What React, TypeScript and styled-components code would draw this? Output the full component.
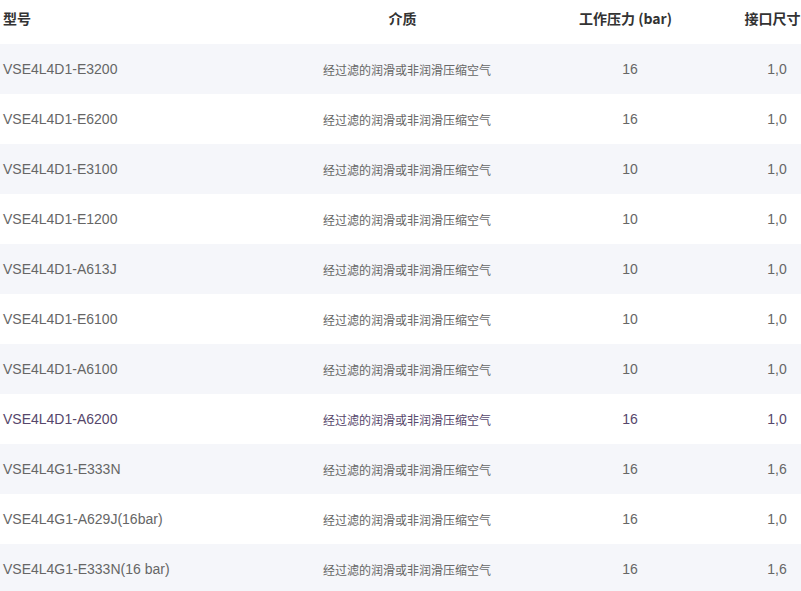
import React from "react";
import styled, { createGlobalStyle } from "styled-components";

const Global = createGlobalStyle`
  html, body { margin: 0; padding: 0; background: #fff; overflow: hidden; }
  body { font-family: "Liberation Sans", "Noto Sans CJK SC", sans-serif; }
`;

const Wrapper = styled.div`
  width: 801px;
  overflow: hidden;
`;

const Table = styled.div`
  width: 850px;
  display: grid;
  grid-template-columns: 258px 298px 148px 146px;
`;

const HeadCell = styled.div<{ $align: string }>`
  padding: 8px 9px 16px 3px;
  ${(p) => (p.$align === "left" ? "padding-right: 0;" : "padding-left: 0;")}
  line-height: 20px;
  font-size: 14px;
  font-weight: bold;
  color: #333;
  text-align: ${(p) => p.$align};
  white-space: nowrap;
  font-family: "Noto Sans CJK SC", "Liberation Sans", sans-serif;
`;

const Cell = styled.div<{ $align: string; $alt: boolean; $active: boolean; $small?: boolean }>`
  height: 50px;
  display: flex;
  align-items: center;
  justify-content: ${(p) => (p.$align === "left" ? "flex-start" : "center")};
  padding-left: ${(p) => (p.$align === "left" ? "3px" : "0")};
  box-sizing: border-box;
  background: ${(p) => (p.$alt ? "#f5f6fa" : "#fff")};
  color: ${(p) => (p.$active ? "#56476b" : "#666")};
  font-size: ${(p) => (p.$small ? "12px" : "14px")};
  font-family: ${(p) =>
    p.$small
      ? '"Noto Sans CJK SC", sans-serif'
      : '"Liberation Sans", "Noto Sans CJK SC", sans-serif'};
  white-space: nowrap;
`;

const rows = [
  ["VSE4L4D1-E3200", "16", "1,0"],
  ["VSE4L4D1-E6200", "16", "1,0"],
  ["VSE4L4D1-E3100", "10", "1,0"],
  ["VSE4L4D1-E1200", "10", "1,0"],
  ["VSE4L4D1-A613J", "10", "1,0"],
  ["VSE4L4D1-E6100", "10", "1,0"],
  ["VSE4L4D1-A6100", "10", "1,0"],
  ["VSE4L4D1-A6200", "16", "1,0"],
  ["VSE4L4G1-E333N", "16", "1,6"],
  ["VSE4L4G1-A629J(16bar)", "16", "1,0"],
  ["VSE4L4G1-E333N(16 bar)", "16", "1,6"],
];

const medium = "经过滤的润滑或非润滑压缩空气";

export default function App() {
  return (
    <Wrapper>
      <Global />
      <Table>
        <HeadCell $align="left">型号</HeadCell>
        <HeadCell $align="center">介质</HeadCell>
        <HeadCell $align="center">工作压力 (bar)</HeadCell>
        <HeadCell $align="center">接口尺寸</HeadCell>
        {rows.map((r, i) => {
          const alt = i % 2 === 0;
          const active = i === 7;
          return (
            <React.Fragment key={i}>
              <Cell $align="left" $alt={alt} $active={active}>{r[0]}</Cell>
              <Cell $align="center" $alt={alt} $active={active} $small>{medium}</Cell>
              <Cell $align="center" $alt={alt} $active={active}>{r[1]}</Cell>
              <Cell $align="center" $alt={alt} $active={active}>{r[2]}</Cell>
            </React.Fragment>
          );
        })}
      </Table>
    </Wrapper>
  );
}
